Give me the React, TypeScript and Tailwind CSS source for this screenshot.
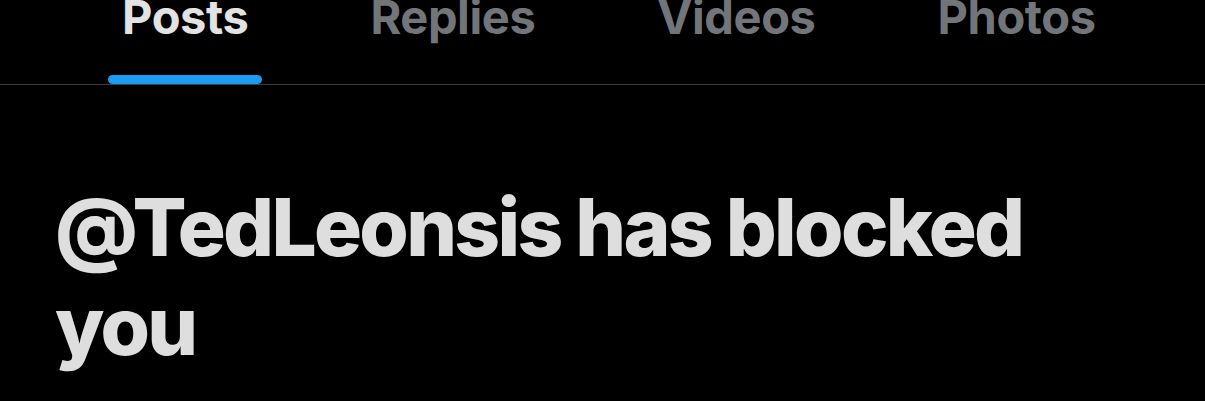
export default function App() {
  const tabs = ["Posts", "Replies", "Videos", "Photos"];
  return (
    <div
      className="w-[1205px] h-[401px] bg-black overflow-hidden"
      style={{ fontFamily: "Inter, 'Noto Sans', 'Liberation Sans', sans-serif" }}
    >
      {/* tab strip, scrolled so labels sit at the top edge */}
      <div className="flex flex-col h-[85px] border-b border-[#3a3d40]">
        <div className="flex pl-[61px] -mt-[11px]">
          {tabs.map((t, i) => (
            <div key={t} className="relative px-[61px]">
              <span
                className={`block text-[47px] font-bold leading-[56px] tracking-[-0.4px] ${
                  i === 0 ? "text-[#e2e2e2]" : "text-[#72767a]"
                }`}
              >
                {t}
              </span>
              {i === 0 && (
                <div className="absolute left-[47px] right-[47px] top-[86px] h-[9px] rounded-full bg-[#1d9bf0]" />
              )}
            </div>
          ))}
        </div>
      </div>
      {/* blocked notice */}
      <div className="pl-[55px] pt-[92px]">
        <h1 className="w-[1080px] text-[80px] font-extrabold leading-[99px] text-[#dedede] tracking-[-2.7px]">
          @TedLeonsis has blocked you
        </h1>
      </div>
    </div>
  );
}
